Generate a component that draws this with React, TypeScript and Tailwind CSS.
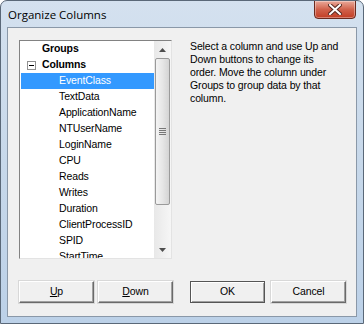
import React from "react";

const items = [
  "EventClass",
  "TextData",
  "ApplicationName",
  "NTUserName",
  "LoginName",
  "CPU",
  "Reads",
  "Writes",
  "Duration",
  "ClientProcessID",
  "SPID",
  "StartTime",
];

function Btn({ children, primary }: { children: React.ReactNode; primary?: boolean }) {
  return (
    <button
      className={
        "flex h-[22px] w-[75px] items-center justify-center border bg-[#f0f0f0] text-[10.5px] tracking-[-0.12px] text-black " +
        (primary
          ? "border-[#555] shadow-[inset_1px_1px_0_#fff,inset_-1px_-1px_0_#a0a0a0]"
          : "border-t-[#fff] border-l-[#fff] border-r-[#6a6a6a] border-b-[#6a6a6a] shadow-[inset_-1px_-1px_0_#a0a0a0,0_0_0_1px_#d8d8d8]")
      }
    >
      {children}
    </button>
  );
}

function Arrow({ up }: { up?: boolean }) {
  return (
    <div className="flex h-[17px] w-full items-center justify-center">
      <svg width="7" height="4" viewBox="0 0 7 4">
        <path d={up ? "M0 4 L3.5 0 L7 4 Z" : "M0 0 L3.5 4 L7 0 Z"} fill="#4d4d4d" />
      </svg>
    </div>
  );
}

export default function App() {
  return (
    <div
      className="flex h-[324px] w-[364px] flex-col overflow-hidden rounded-t-[7px] border border-[#5a6878] bg-gradient-to-b from-[#d4e1ef] via-[#c7d8ea] to-[#bcd1e8]"
      style={{ fontFamily: '"Liberation Sans", Arial, sans-serif' }}
    >
      {/* title bar */}
      <div className="flex h-[26px] shrink-0 items-start justify-between">
        <span className="mt-[5px] pl-[7px] text-[11.5px] text-black" style={{ fontFamily: '"Open Sans", "Liberation Sans", sans-serif' }}>
          Organize Columns
        </span>
        <div className="mr-[7px] mt-[-1px] flex h-[19px] w-[42px] items-center justify-center rounded-b-[4px] border border-[#6b2a1e] bg-gradient-to-b from-[#e9a99a] via-[#d0614b] to-[#c23c22] shadow-[inset_0_0_0_1px_rgba(255,255,255,0.35)]">
          <svg width="14" height="11" viewBox="0 0 14 11">
            <path d="M2 1 L12 10 M12 1 L2 10" stroke="#5a2a22" strokeWidth="4" strokeLinecap="square" />
            <path d="M2 1 L12 10 M12 1 L2 10" stroke="#fff" strokeWidth="2" strokeLinecap="square" />
          </svg>
        </div>
      </div>

      {/* client area */}
      <div className="mx-[6px] flex h-[290px] flex-col border border-[#8a98a8] bg-[#f0f0f0] text-[10.5px] tracking-[-0.12px] text-black">
        <div className="flex">
          {/* tree list */}
          <div className="ml-[11px] mt-[12px] flex h-[219px] w-[153px] border border-t-[#828282] border-l-[#828282] border-r-[#e3e3e3] border-b-[#e3e3e3] bg-white">
            <div className="flex-1 overflow-hidden">
              <div className="flex h-[16px] items-center pl-[22px] font-bold">Groups</div>
              <div className="relative flex h-[16px] items-center pl-[22px] font-bold">
                <span className="absolute left-[7px] top-[4px] flex h-[9px] w-[9px] items-center justify-center border border-[#919191] bg-white">
                  <span className="h-px w-[5px] bg-black" />
                </span>
                Columns
              </div>
              {items.map((it, i) => (
                <div
                  key={it}
                  className={
                    "flex h-[16px] items-center pl-[39px] " +
                    (i === 0 ? "ml-px bg-[#3399ff] text-white" : "")
                  }
                >
                  {i === 0 ? <span className="-ml-px">{it}</span> : it}
                </div>
              ))}
            </div>
            {/* scrollbar */}
            <div className="flex w-[17px] flex-col bg-gradient-to-r from-[#e8e8e8] to-[#f6f6f6]">
              <Arrow up />
              <div className="mx-px flex h-[147px] items-center justify-center rounded-[2px] border border-[#9a9a9a] bg-gradient-to-r from-[#f4f4f4] via-[#e6e6e6] to-[#d4d4d4]">
                <div className="flex flex-col gap-px">
                  <span className="h-px w-[7px] bg-[#777]" />
                  <span className="h-px w-[7px] bg-[#777]" />
                  <span className="h-px w-[7px] bg-[#777]" />
                  <span className="h-px w-[7px] bg-[#777]" />
                </div>
              </div>
              <div className="flex-1" />
              <Arrow />
            </div>
          </div>

          {/* description */}
          <p className="ml-[18px] mt-[12px] leading-[13px]">
            Select a column and use Up and
            <br />
            Down buttons to change its
            <br />
            order. Move the column under
            <br />
            Groups to group data by that
            <br />
            column.
          </p>
        </div>

        {/* buttons */}
        <div className="ml-[11px] mt-[22px] flex">
          <Btn>
            <span className="underline">U</span>p
          </Btn>
          <div className="ml-[4px]">
            <Btn>
              <span className="underline">D</span>own
            </Btn>
          </div>
          <div className="ml-[17px]">
            <Btn primary>OK</Btn>
          </div>
          <div className="ml-[6px]">
            <Btn>Cancel</Btn>
          </div>
        </div>
      </div>
    </div>
  );
}
